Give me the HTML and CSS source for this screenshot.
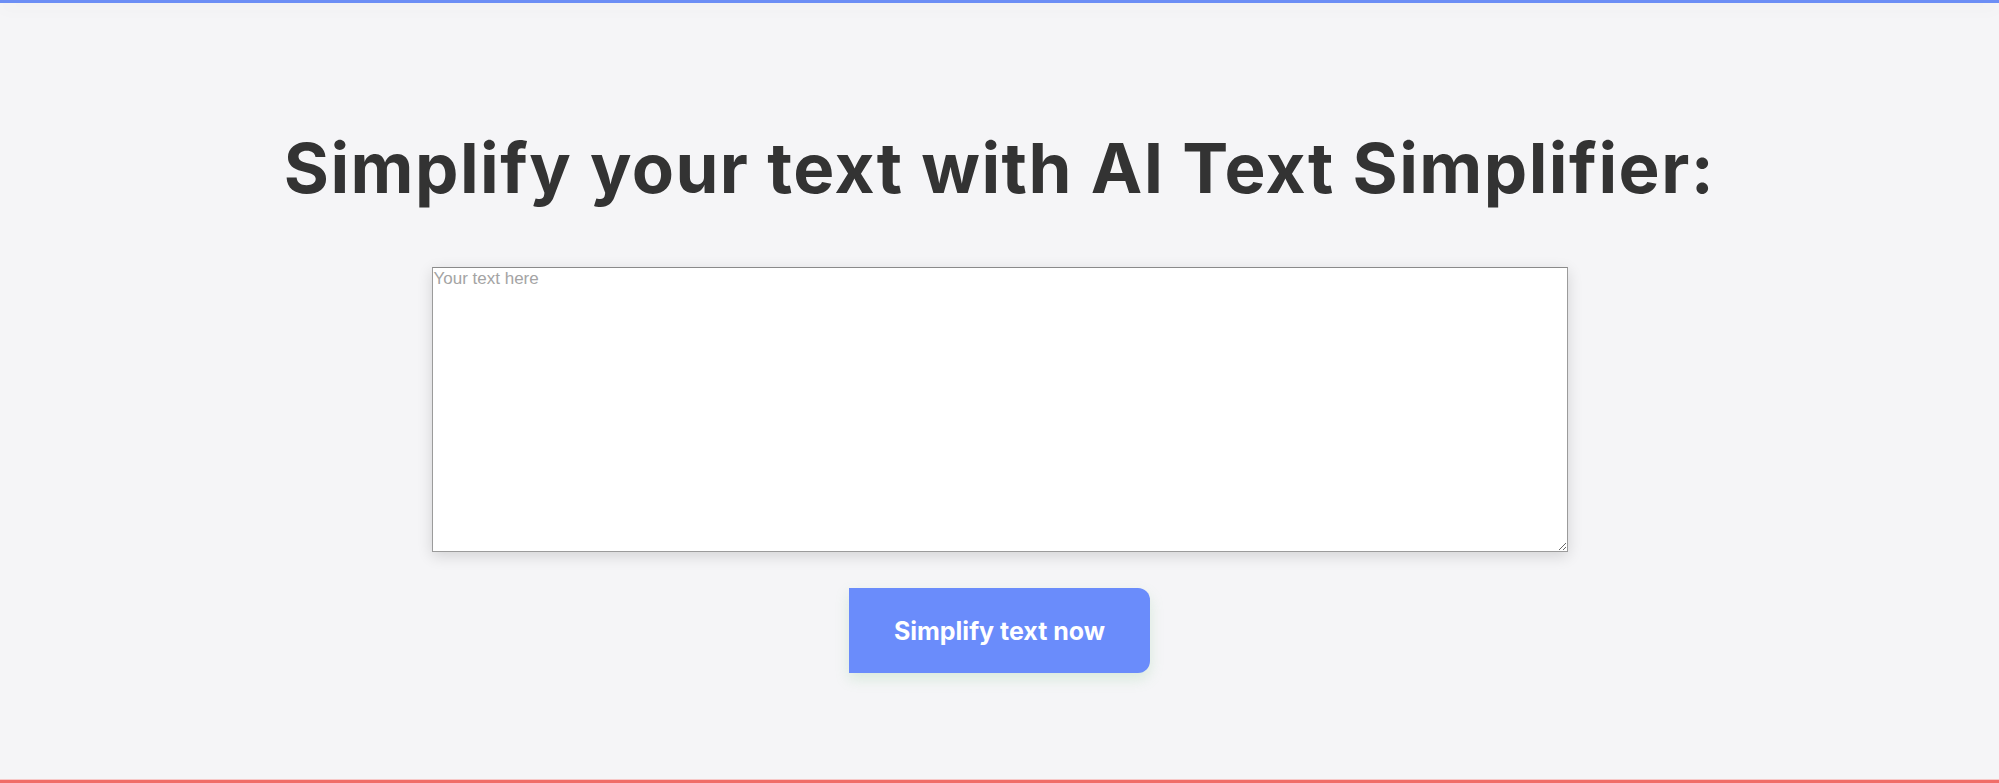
FILE: index.html
```html
<!DOCTYPE html>
<html lang="en">
<head>
<meta charset="utf-8">
<title>AI Text Simplifier</title>
<link rel="stylesheet" href="styles.css">
</head>
<body>
<div class="top-bar"></div>
<main class="main">
  <h1 class="title">Simplify your text with AI Text Simplifier:</h1>
  <textarea class="input" placeholder="Your text here"></textarea>
  <button class="btn" type="button">Simplify text now</button>
</main>
<div class="bottom-bar"></div>
</body>
</html>
```

FILE: styles.css
```css
html, body {
  margin: 0;
  padding: 0;
  height: 100%;
}
body {
  background: #f5f5f7;
  display: flex;
  flex-direction: column;
  overflow: hidden;
  font-family: "Inter", "Liberation Sans", sans-serif;
}
.top-bar {
  height: 3px;
  background: #6c8ef5;
  box-shadow: 0 3px 18px rgba(0, 0, 0, 0.09);
  position: relative;
  z-index: 1;
}
.main {
  flex: 1;
  display: flex;
  flex-direction: column;
  align-items: center;
  padding-top: 125px;
}
.title {
  margin: 0;
  font-family: "Inter", "Liberation Sans", sans-serif;
  font-weight: 700;
  font-size: 69px;
  line-height: 81px;
  color: #333333;
  letter-spacing: 1.45px;
}
.input {
  box-sizing: border-box;
  margin-top: 58px;
  width: 1136px;
  height: 285px;
  border: 1px solid #9b9b9b;
  border-top-color: #8a8a8a;
  background: #ffffff;
  padding: 1px 1px;
  font-family: "Liberation Sans", Arial, sans-serif;
  font-size: 17px;
  color: #333;
  box-shadow: 0 4px 14px rgba(0, 0, 0, 0.14);
  resize: both;
  outline: none;
}
.input::placeholder {
  color: #a4a4a4;
}
.btn {
  margin-top: 36px;
  width: 301px;
  height: 85px;
  border: none;
  border-radius: 0 12px 12px 0;
  background: #6a8cfb;
  color: #ffffff;
  font-family: "Inter", "Liberation Sans", sans-serif;
  font-weight: 700;
  font-size: 25px;
  box-shadow: 0 6px 14px rgba(120, 200, 130, 0.22);
  cursor: pointer;
}
.bottom-bar {
  height: 3px;
  background: #f06d68;
  border-top: 1px solid #f7c8c8;
}
```
